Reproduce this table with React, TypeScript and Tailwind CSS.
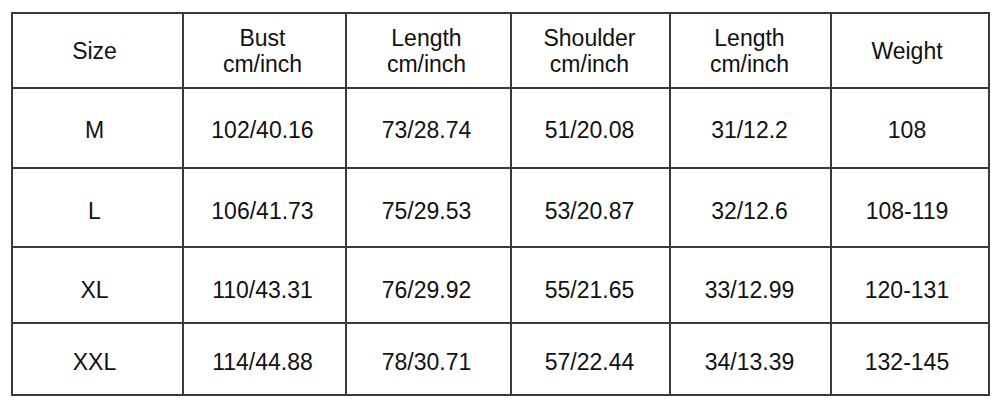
import React from "react";

const header: string[][] = [
  ["Size"],
  ["Bust", "cm/inch"],
  ["Length", "cm/inch"],
  ["Shoulder", "cm/inch"],
  ["Length", "cm/inch"],
  ["Weight"],
];

const rows: string[][] = [
  ["M", "102/40.16", "73/28.74", "51/20.08", "31/12.2", "108"],
  ["L", "106/41.73", "75/29.53", "53/20.87", "32/12.6", "108-119"],
  ["XL", "110/43.31", "76/29.92", "55/21.65", "33/12.99", "120-131"],
  ["XXL", "114/44.88", "78/30.71", "57/22.44", "34/13.39", "132-145"],
];

// small horizontal nudges per column (px), matching the reference's text placement
const colShift = [
  "-translate-x-[3px]",
  "-translate-x-[2px]",
  "-translate-x-[2px]",
  "-translate-x-[1px]",
  "-translate-x-[1px]",
  "-translate-x-[3px]",
];
const rowShift = ["pt-[4px]", "pt-[6px]", "pt-[10px]", "pt-[6px]"];

export default function App() {
  return (
    <div
      className="w-[1000px] h-[405px] bg-white pl-[11px] pt-[12px]"
      style={{ fontFamily: '"Liberation Sans", Arial, sans-serif' }}
    >
      <div className="grid w-fit bg-[#3a3a3a] p-[2px] gap-[2px] grid-cols-[169px_161px_163px_157px_159px_156px] grid-rows-[73px_78px_77px_74px_70px] text-[23px] text-[#111] leading-[26px]">
        {header.map((h, i) => (
          <div
            key={"h" + i}
            className="bg-white flex flex-col items-center justify-center"
          >
            <div className={"flex flex-col items-center " + colShift[i]}>
              {h.map((t, j) => (
                <span key={j}>{t}</span>
              ))}
            </div>
          </div>
        ))}
        {rows.map((r, ri) =>
          r.map((c, ci) => (
            <div
              key={ri + "-" + ci}
              className={"bg-white flex items-center justify-center " + rowShift[ri]}
            >
              <span className={colShift[ci]}>{c}</span>
            </div>
          ))
        )}
      </div>
    </div>
  );
}
